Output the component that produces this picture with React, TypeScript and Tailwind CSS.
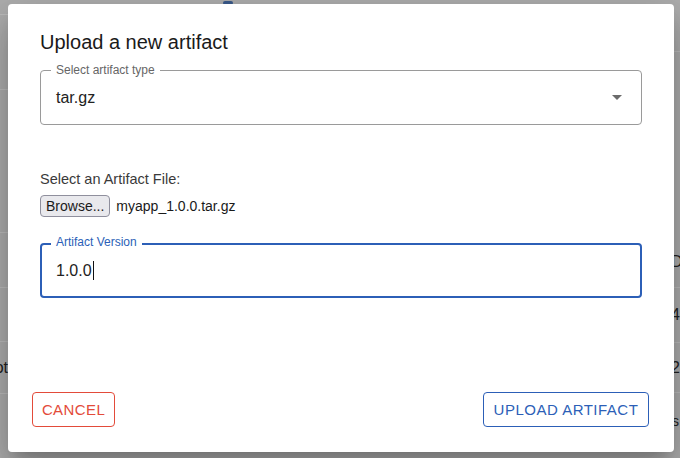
import React from "react";

const font = { fontFamily: '"Liberation Sans", Arial, sans-serif' };

function Backdrop() {
  return (
    <div className="flex h-full w-full bg-[#aeaeae] text-[#222]">
      {/* left strip of the page behind */}
      <div className="w-[8px] flex flex-col overflow-hidden">
        <div className="h-[15px] border-b border-[#bdbdbd]" />
        <div className="h-[75px] border-b border-[#bdbdbd]" />
        <div className="h-[143px] border-b border-[#bdbdbd]" />
        <div className="h-[55px] border-b border-[#bdbdbd]" />
        <div className="h-[54px] border-b border-[#bdbdbd]" />
        <div className="h-[52px] border-b border-[#bdbdbd] flex items-center justify-end">
          <span className="text-[16px] leading-[20px] whitespace-nowrap">ot</span>
        </div>
      </div>
      <div className="flex-1 flex items-start">
        <div className="ml-[215px] w-[10px] h-[4px] mt-[1px] rounded-full bg-[#3a5a8c]" />
      </div>
      {/* right strip of the page behind */}
      <div className="w-[8px] flex flex-col overflow-hidden">
        <div className="h-[52px] border-b border-[#bdbdbd]" />
        <div className="h-[200px]" />
        <div className="h-[36px] border-b border-[#bdbdbd] flex items-start">
          <span className="text-[16px] leading-[20px] ml-[-1px]">D</span>
        </div>
        <div className="h-[55px] border-b border-[#bdbdbd] flex items-center">
          <span className="text-[16px] leading-[20px] ml-[-1px]">4</span>
        </div>
        <div className="h-[50px] border-b border-[#bdbdbd] flex items-center">
          <span className="text-[16px] leading-[20px] ml-[-1px]">2</span>
        </div>
        <div className="h-[55px] flex items-center">
          <span className="text-[14px] leading-[18px]">s</span>
        </div>
      </div>
    </div>
  );
}

export default function App() {
  return (
    <div className="relative w-[680px] h-[458px] overflow-hidden" style={font}>
      <Backdrop />
      {/* Dialog lies over the page */}
      <div className="absolute left-[8px] top-[4px] z-10 w-[666px] h-[448px] bg-white rounded-[4px] flex flex-col shadow-[0_11px_15px_-7px_rgba(0,0,0,0.2),0_24px_38px_3px_rgba(0,0,0,0.14),0_9px_46px_8px_rgba(0,0,0,0.12)]">
        <div className="pt-[22px] px-[32px] flex flex-col">
          <h2 className="text-[20px] leading-[32px] font-normal text-[#1a1a1a]">Upload a new artifact</h2>

          {/* Select field */}
          <div className="relative mt-[12px] h-[55px] border border-[#9a9a9a] rounded-[4px] flex items-center pl-[15px] pr-[19px]">
            <span className="absolute left-[10px] -top-[8px] bg-white px-[5px] text-[12px] leading-[14px] text-[#666]">
              Select artifact type
            </span>
            <span className="flex-1 text-[16px] leading-[20px] text-[#222]">tar.gz</span>
            <svg width="10" height="5" viewBox="0 0 10 5" className="block">
              <path d="M0 0 L10 0 L5 5 Z" fill="#6b6b6b" />
            </svg>
          </div>

          <div className="mt-[44px] text-[14.5px] leading-[20px] text-[#3a3a3a]">Select an Artifact File:</div>

          <div className="mt-[6px] flex items-center gap-[6px]">
            <button className="h-[22px] px-[5px] rounded-[4px] border border-[#8f8f9d] bg-[#e9e9ed] text-[14px] leading-[18px] text-[#1a1a1a]">
              Browse...
            </button>
            <span className="text-[14px] leading-[18px] text-[#1a1a1a]">myapp_1.0.0.tar.gz</span>
          </div>

          {/* Version field focused */}
          <div className="relative mt-[26px] h-[55px] border-2 border-[#2c5fb7] rounded-[4px] flex items-center pl-[14px]">
            <span className="absolute left-[9px] -top-[10px] bg-white px-[5px] text-[12px] leading-[14px] text-[#2c5fb7]">
              Artifact Version
            </span>
            <span className="text-[16px] leading-[20px] text-[#222]">1.0.0</span>
            <span className="ml-[1px] w-px h-[19px] bg-[#111]" />
          </div>
        </div>

        <div className="flex-1" />

        <div className="flex justify-between pl-[24px] pr-[25px] pb-[25px]">
          <button className="h-[35px] w-[83px] flex items-center justify-center rounded-[4px] border border-[#e34b3a] text-[#e34b3a] text-[15px] leading-[18px] tracking-[0.4px] uppercase font-normal">
            Cancel
          </button>
          <button className="h-[35px] w-[166px] flex items-center justify-center rounded-[4px] border border-[#2c5fb7] text-[#2c5fb7] text-[15px] leading-[18px] tracking-[0.5px] uppercase font-normal">
            Upload Artifact
          </button>
        </div>
      </div>
    </div>
  );
}
